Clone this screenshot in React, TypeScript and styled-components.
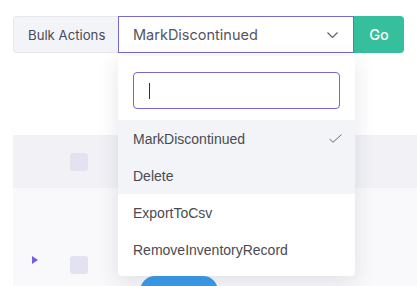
import React from "react";
import styled, { createGlobalStyle } from "styled-components";

const Global = createGlobalStyle`
  html, body { margin: 0; padding: 0; background: #ffffff; }
  body { font-family: Inter, "Noto Sans", sans-serif; overflow: hidden; }
  * { box-sizing: border-box; }
`;

const Page = styled.div`
  position: relative;
  width: 417px;
  height: 286px;
  overflow: hidden;
  padding: 16px 0 0 13px;
`;

const Toolbar = styled.div`
  display: flex;
  height: 37px;
`;

const BulkLabel = styled.div`
  width: 105px;
  display: flex;
  align-items: center;
  padding-left: 14px;
  background: #f3f4f8;
  border: 1px solid #e7e8ee;
  border-right: none;
  border-radius: 4px 0 0 4px;
  font-size: 13.2px;
  color: #4a4a55;
`;

const Select = styled.div`
  width: 236px;
  display: flex;
  align-items: center;
  justify-content: space-between;
  padding: 0 15px 0 14px;
  border: 1px solid #7468d2;
  background: #fff;
  font-size: 14.5px;
  color: #55555f;
`;

const GoButton = styled.button`
  width: 50px;
  border: none;
  background: #35bf9c;
  color: #fff;
  font-family: Inter, "Noto Sans", sans-serif;
  font-size: 14.5px;
  font-weight: 500;
  border-radius: 0 4px 4px 0;
  padding: 0;
`;

const Table = styled.div`
  margin-top: 82px;
  display: flex;
  flex-direction: column;
`;

const Row = styled.div<{ $head?: boolean; $h: number }>`
  display: flex;
  align-items: flex-start;
  height: ${(p) => p.$h}px;
  background: ${(p) => (p.$head ? "#f1f1f6" : "#f9f9fb")};
`;

const ExpandCell = styled.div<{ $top: number }>`
  width: 57px;
  padding: ${(p) => p.$top}px 0 0 19px;
`;

const CheckCell = styled.div<{ $top: number }>`
  width: 70px;
  padding-top: ${(p) => p.$top}px;
`;

const Box = styled.div`
  width: 18px;
  height: 18px;
  border-radius: 3px;
  background: #e3e2f0;
`;

const Caret = styled.div`
  width: 0;
  height: 0;
  border-top: 4.5px solid transparent;
  border-bottom: 4.5px solid transparent;
  border-left: 6px solid #7a5ce0;
`;

const Pill = styled.div`
  width: 78px;
  height: 30px;
  border-radius: 15px;
  background: #3b9ce9;
  margin-top: 38px;
`;

const Menu = styled.div`
  position: absolute;
  left: 118px;
  top: 56px;
  width: 237px;
  height: 220px;
  background: #fff;
  border-radius: 4px;
  box-shadow: 0 6px 22px rgba(40, 40, 80, 0.12);
  padding: 16px 0 8px;
  display: flex;
  flex-direction: column;
`;

const Search = styled.div`
  margin: 0 15px 11px;
  height: 37px;
  border: 1px solid #7468d2;
  border-radius: 4px;
  display: flex;
  align-items: center;
  padding-left: 15px;
`;

const CaretLine = styled.span`
  width: 1px;
  height: 16px;
  background: #333;
`;

const Item = styled.div<{ $shade?: boolean }>`
  height: 37px;
  display: flex;
  align-items: center;
  justify-content: space-between;
  padding: 0 13px 0 15px;
  background: ${(p) => (p.$shade ? "#f3f4f8" : "#fff")};
  font-family: "Liberation Sans", Arial, sans-serif;
  font-size: 14px;
  color: #4a4a52;
`;

const Chevron = () => (
  <svg width="11" height="6" viewBox="0 0 11 6" fill="none">
    <path d="M0.5 0.5 L5.5 5.5 L10.5 0.5" stroke="#5a5a70" strokeWidth="1.1" />
  </svg>
);

const Check = () => (
  <svg width="13" height="9" viewBox="0 0 13 9" fill="none">
    <path d="M0.5 5 L4 8.3 L12.5 0.5" stroke="#6a6a72" strokeWidth="1" />
  </svg>
);

export default function App() {
  return (
    <>
      <Global />
      <Page>
        <Toolbar>
          <BulkLabel>Bulk Actions</BulkLabel>
          <Select>
            <span>MarkDiscontinued</span>
            <Chevron />
          </Select>
          <GoButton>Go</GoButton>
        </Toolbar>
        <Table>
          <Row $head $h={53}>
            <ExpandCell $top={18} />
            <CheckCell $top={18}>
              <Box />
            </CheckCell>
          </Row>
          <Row $h={50} />
          <Row $h={60}>
            <ExpandCell $top={18}>
              <Caret />
            </ExpandCell>
            <CheckCell $top={18}>
              <Box />
            </CheckCell>
            <Pill />
          </Row>
        </Table>
        <Menu>
          <Search>
            <CaretLine />
          </Search>
          <Item $shade>
            <span>MarkDiscontinued</span>
            <Check />
          </Item>
          <Item $shade>Delete</Item>
          <Item>ExportToCsv</Item>
          <Item>RemoveInventoryRecord</Item>
        </Menu>
      </Page>
    </>
  );
}
